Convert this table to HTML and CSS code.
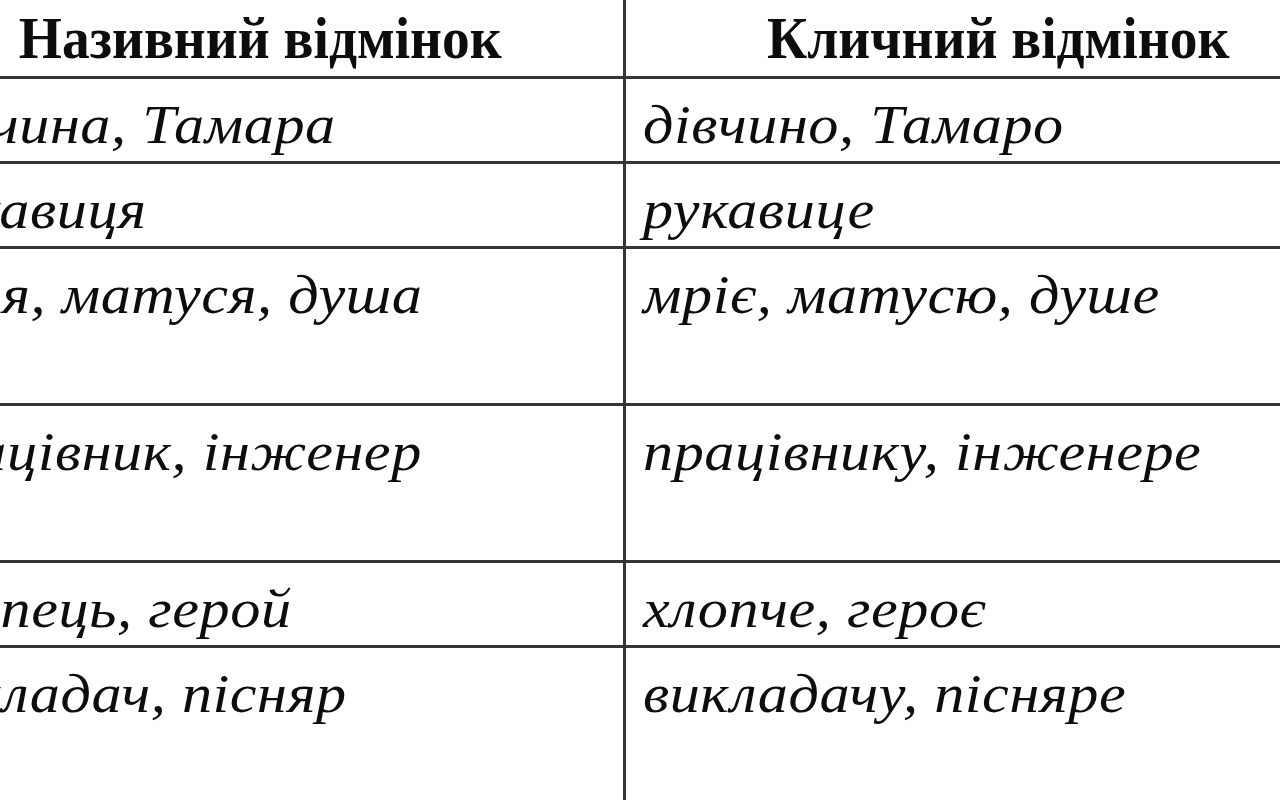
FILE: index.html
```html
<!DOCTYPE html>
<html lang="uk">
<head>
<meta charset="utf-8">
<title>Кличний відмінок</title>
<link rel="stylesheet" href="styles.css">
</head>
<body>
<table class="cases">
  <colgroup>
    <col class="col-left">
    <col class="col-right">
  </colgroup>
  <thead>
    <tr class="row-head">
      <th><span class="txt">Називний відмінок</span></th>
      <th><span class="txt">Кличний відмінок</span></th>
    </tr>
  </thead>
  <tbody>
    <tr class="row-s"><td><span class="txt">дівчина, Тамара</span></td><td><span class="txt">дівчино, Тамаро</span></td></tr>
    <tr class="row-s"><td><span class="txt">рукавиця</span></td><td><span class="txt">рукавице</span></td></tr>
    <tr class="row-l"><td><span class="txt">мрія, матуся, душа</span></td><td><span class="txt">мріє, матусю, душе</span></td></tr>
    <tr class="row-l"><td><span class="txt">працівник, інженер</span></td><td><span class="txt">працівнику, інженере</span></td></tr>
    <tr class="row-s"><td><span class="txt">хлопець, герой</span></td><td><span class="txt">хлопче, героє</span></td></tr>
    <tr class="row-l"><td><span class="txt">викладач, пісняр</span></td><td><span class="txt">викладачу, пісняре</span></td></tr>
  </tbody>
</table>
</body>
</html>
```
FILE: styles.css
```css
html, body {
  margin: 0;
  padding: 0;
  background: #ffffff;
  overflow: hidden;
}

.cases {
  border-collapse: collapse;
  width: 1476px;
  margin: -30px 0 0 -105px;
  font-family: "Liberation Serif", "Times New Roman", serif;
  color: #0d0d0d;
  table-layout: fixed;
}

.col-left { width: 728px; }
.col-right { width: 748px; }

.cases th,
.cases td {
  border: 3px solid #353535;
  padding: 0 17px;
}

.txt {
  display: inline-block;
  white-space: nowrap;
}

.cases th {
  font-size: 60px;
  font-weight: bold;
  text-align: center;
  vertical-align: bottom;
  padding-bottom: 3px;
}

.cases th .txt {
  transform: scaleX(0.924);
  transform-origin: center;
}

.cases td {
  font-size: 54px;
  font-style: italic;
  vertical-align: top;
  padding-top: 15px;
  white-space: nowrap;
}

.cases td .txt {
  letter-spacing: 0.5px;
  transform: scaleX(1.115);
  transform-origin: left;
}

.row-head { height: 106px; }
.row-s { height: 85px; }
.row-l { height: 157px; }
```
